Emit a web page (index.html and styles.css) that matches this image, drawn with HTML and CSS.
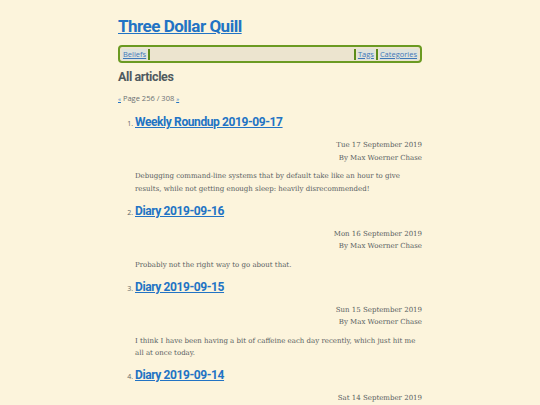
FILE: index.html
```html
<!DOCTYPE html>
<html>
<head>
<meta charset="utf-8">
<link rel="stylesheet" href="styles.css">
</head>
<body>
<div class="page">
  <header class="site-head">
    <h1 class="site-title"><a href="#">Three Dollar Quill</a></h1>
    <nav class="nav">
      <a class="nav-link" href="#">Beliefs</a>
      <span class="sep"></span>
      <span class="search"></span>
      <span class="sep"></span>
      <a class="nav-link" href="#">Tags</a>
      <span class="sep"></span>
      <a class="nav-link" href="#">Categories</a>
    </nav>
  </header>
  <h2 class="section-title">All articles</h2>
  <p class="pager"><a href="#">«</a> Page 256 / 308 <a href="#">»</a></p>
  <ol class="articles">
    <li class="article">
      <h3 class="article-title"><a href="#">Weekly Roundup 2019-09-17</a></h3>
      <div class="meta">
        <div>Tue 17 September 2019</div>
        <div>By Max Woerner Chase</div>
      </div>
      <p class="summary">Debugging command-line systems that by default take like an hour to give results, while not getting enough sleep: heavily disrecommended!</p>
    </li>
    <li class="article">
      <h3 class="article-title"><a href="#">Diary 2019-09-16</a></h3>
      <div class="meta">
        <div>Mon 16 September 2019</div>
        <div>By Max Woerner Chase</div>
      </div>
      <p class="summary">Probably not the right way to go about that.</p>
    </li>
    <li class="article">
      <h3 class="article-title"><a href="#">Diary 2019-09-15</a></h3>
      <div class="meta">
        <div>Sun 15 September 2019</div>
        <div>By Max Woerner Chase</div>
      </div>
      <p class="summary">I think I have been having a bit of caffeine each day recently, which just hit me all at once today.</p>
    </li>
    <li class="article">
      <h3 class="article-title"><a href="#">Diary 2019-09-14</a></h3>
      <div class="meta">
        <div>Sat 14 September 2019</div>
        <div>By Max Woerner Chase</div>
      </div>
      <p class="summary">More text here.</p>
    </li>
  </ol>
</div>
</body>
</html>
```
FILE: styles.css
```css
html, body {
  margin: 0;
  padding: 0;
  background: #fcf4dc;
}
body {
  font-family: "DejaVu Serif", serif;
  color: #5d6669;
}
.page {
  width: 304px;
  margin: 0 auto;
  padding-top: 15px;
}
a {
  color: #2273c4;
}
.site-title {
  margin: 0;
  font-family: Roboto, sans-serif;
  font-weight: 700;
  font-size: 17px;
  line-height: 22px;
  letter-spacing: -0.5px;
}
.nav {
  margin-top: 8px;
  display: flex;
  align-items: center;
  height: 12px;
  padding: 1px 2px;
  border: 2px solid #6b9a22;
  border-radius: 4px;
  background: #ece4cf;
  font-family: "Open Sans", sans-serif;
  font-size: 7.5px;
}
.nav-link {
  color: #3f78b8;
  background: #dfe3dc;
  padding: 0 1px;
  line-height: 11px;
}
.sep {
  width: 2px;
  height: 11px;
  background: #5c8c1a;
  margin: 0 1px;
}
.search {
  flex: 1;
  height: 11px;
}
.section-title {
  margin: 6px 0 0;
  font-family: Roboto, sans-serif;
  font-weight: 700;
  font-size: 12.5px;
  line-height: 16px;
  color: #4f5a5f;
  letter-spacing: -0.4px;
}
.pager {
  margin: 8px 0 0;
  font-family: "Open Sans", sans-serif;
  font-size: 7.5px;
  line-height: 10px;
  color: #6a7073;
}
.pager a {
  font-size: 6px;
}
.articles {
  margin: 8px 0 0;
  padding-left: 17px;
  font-size: 7px;
}
.article {
  font-family: "Open Sans", sans-serif;
  color: #5f6668;
}
.article::marker {
  font-size: 7px;
}
.article-title {
  margin: 0;
  display: inline-block;
  font-family: Roboto, sans-serif;
  font-weight: 700;
  font-size: 12px;
  line-height: 20px;
  letter-spacing: -0.4px;
}
.meta {
  margin-top: 7px;
  text-align: right;
  font-family: "DejaVu Serif", serif;
  font-size: 7px;
  line-height: 12.5px;
  color: #586062;
}
.summary {
  margin: 6px 0 5.5px;
  font-family: "DejaVu Serif", serif;
  font-size: 7px;
  line-height: 12.5px;
  color: #586062;
}
```
